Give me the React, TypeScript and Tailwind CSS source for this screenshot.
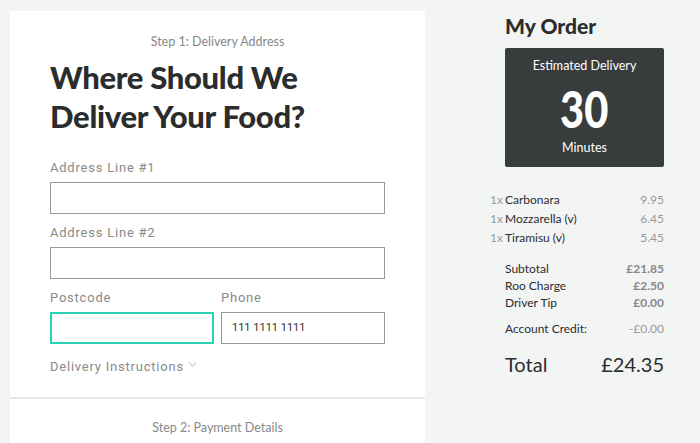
import React from "react";
import { ChevronDown } from "lucide-react";

const items = [
  { qty: "1x", name: "Carbonara", price: "9.95" },
  { qty: "1x", name: "Mozzarella (v)", price: "6.45" },
  { qty: "1x", name: "Tiramisu (v)", price: "5.45" },
];

const charges = [
  { name: "Subtotal", price: "£21.85" },
  { name: "Roo Charge", price: "£2.50" },
  { name: "Driver Tip", price: "£0.00" },
];

const Field = ({ label, value, active }: { label: string; value?: string; active?: boolean }) => (
  <div className="flex flex-col">
    <label className="text-[13px] leading-[14px] tracking-[0.06em] text-[#8a8a8a] font-['Roboto',sans-serif] mb-[7px]">
      {label}
    </label>
    <div
      className={`h-[32px] flex items-center px-[10px] bg-white text-[11px] text-[#333] font-['Roboto',sans-serif] ${
        active ? "border-2 border-[#2bd1b6]" : "border border-[#999]"
      }`}
    >
      {value}
    </div>
  </div>
);

export default function App() {
  return (
    <div className="w-[700px] h-[443px] overflow-hidden bg-[#f3f4f4] flex font-['Lato',sans-serif]">
      {/* Checkout form */}
      <div className="ml-[10px] mt-[11px] w-[415px] bg-white flex flex-col">
        <div className="px-[40px] pt-[23px] pb-[22px]">
          <p className="text-center text-[12.5px] text-[#888] leading-4">Step 1: Delivery Address</p>
          <h1 className="mt-[8px] text-[31px] leading-[39px] font-black text-[#2b2d2d] tracking-[-0.01em]">
            Where Should We
            <br />
            Deliver Your Food?
          </h1>

          <div className="mt-[25px] w-[335px] flex flex-col gap-[12px]">
            <Field label="Address Line #1" />
            <Field label="Address Line #2" />
            <div className="grid grid-cols-[164px_164px] gap-[7px]">
              <Field label="Postcode" active />
              <Field label="Phone" value="111 1111 1111" />
            </div>
          </div>

          <div className="mt-[15px] flex items-center leading-4 text-[13px] tracking-[0.06em] text-[#8a8a8a] font-['Roboto',sans-serif]">
            Delivery Instructions
            <ChevronDown className="ml-[2px] -mt-[6px] w-[13px] h-[13px] text-[#ccc]" strokeWidth={2} />
          </div>
        </div>
        <div className="h-[2px] bg-[#e6e6e6]" />
        <p className="mt-[21px] text-center text-[12.5px] text-[#888] leading-4">Step 2: Payment Details</p>
      </div>

      {/* Order summary */}
      <div className="ml-[80px] mt-[13px] w-[159px] flex flex-col">
        <h2 className="text-[21px] leading-[26px] font-black text-[#2b2d2d]">My Order</h2>
        <div className="mt-[9px] h-[119px] rounded-[2px] bg-[#383c3c] flex flex-col items-center text-white">
          <p className="mt-[10px] text-[12.5px] leading-4">Estimated Delivery</p>
          <p className="mt-[10px] text-[52px] leading-[48px] font-black scale-x-[0.8]">30</p>
          <p className="mt-[8px] text-[12.5px] leading-4">Minutes</p>
        </div>

        <div className="mt-[25px] flex flex-col gap-[3px] text-[12px] leading-4">
          {items.map((i) => (
            <div key={i.name} className="flex justify-between">
              <span className="relative text-[#2b2d2d]">
                <span className="absolute -left-[15px] text-[#999]">{i.qty}</span>
                {i.name}
              </span>
              <span className="text-[#999]">{i.price}</span>
            </div>
          ))}
        </div>

        <div className="mt-[15px] flex flex-col gap-[1px] text-[12px] leading-4">
          {charges.map((c) => (
            <div key={c.name} className="flex justify-between">
              <span className="text-[#2b2d2d]">{c.name}</span>
              <span className="font-bold text-[#888]">{c.price}</span>
            </div>
          ))}
        </div>

        <div className="mt-[10px] flex justify-between text-[12px] leading-4">
          <span className="text-[#2b2d2d]">Account Credit:</span>
          <span className="text-[#999]">-£0.00</span>
        </div>

        <div className="mt-[14px] flex justify-between text-[20px] leading-[26px] text-[#2b2d2d]">
          <span>Total</span>
          <span>£24.35</span>
        </div>
      </div>
    </div>
  );
}
